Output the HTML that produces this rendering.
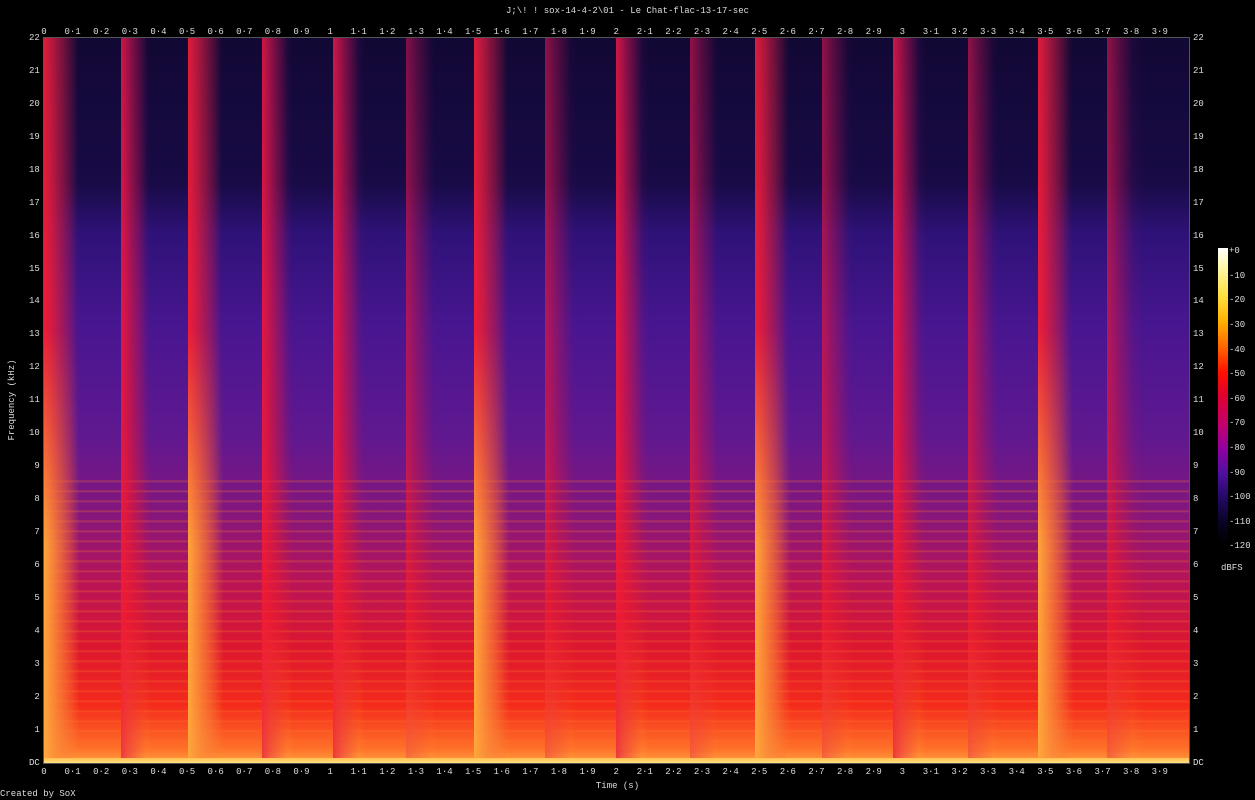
<!DOCTYPE html>
<html><head><meta charset="utf-8"><style>
html,body{margin:0;padding:0;background:#000;width:1255px;height:800px;overflow:hidden;font-family:"Liberation Mono","DejaVu Sans Mono",monospace;color:#ddd;font-size:9px}
.abs{position:absolute}
#plot{position:absolute;left:44px;top:38px;width:1145px;height:725px;overflow:hidden;background:#140838}
.seg{position:absolute;top:0;height:725px;
 background:linear-gradient(to bottom,#120834 0%,#180b46 20%,#2e1278 27%,#481690 40%,#601890 55%,#86167c 66%,#b81458 75%,#dc1630 84%,#f42a1c 92%,#ff7028 98%,#ffa040 100%)}
.seg .early{position:absolute;inset:0;
 background:linear-gradient(to bottom,#701070 0%,#a01068 20%,#d0124a 35%,#e81430 55%,#ff2a14 80%,#ff8024 92%,#ffc848 100%);
 -webkit-mask-image:linear-gradient(to right,rgba(0,0,0,.75) 0,rgba(0,0,0,.3) 20%,transparent 45%);mask-image:linear-gradient(to right,rgba(0,0,0,.75) 0,rgba(0,0,0,.3) 20%,transparent 45%)}
.seg .hl{position:absolute;left:0;right:0;bottom:0;height:40%;
 background:repeating-linear-gradient(to bottom,rgba(255,60,20,0) 0,rgba(255,60,20,0) 7px,rgba(255,120,40,.35) 8px,rgba(255,60,20,0) 10px)}
.seg .edge{position:absolute;left:0;top:0;bottom:0;width:26px;
 background:linear-gradient(to right,rgba(235,25,60,.8) 0,rgba(230,20,60,.45) 10px,rgba(230,20,60,0) 26px)}
.strong .yel{position:absolute;left:0;width:36px;top:40%;bottom:0;
 background:linear-gradient(to right,rgba(255,190,60,.85) 0,rgba(255,190,60,.5) 14px,rgba(255,190,60,0) 36px);
 -webkit-mask-image:linear-gradient(to bottom,transparent,#000 50%);mask-image:linear-gradient(to bottom,transparent,#000 50%)}
.strong .edge{width:34px;background:linear-gradient(to right,rgba(245,30,50,.85) 0,rgba(240,30,50,.5) 14px,rgba(240,30,50,0) 34px)}
.row{position:absolute;display:flex}
.row span{display:block;text-align:center;flex:none}
.col{position:absolute;display:flex;flex-direction:column}
.col span{display:flex;align-items:center;flex:none;height:32.95px}
</style></head><body>
<div class="abs" style="left:0;width:1255px;top:6px;text-align:center">J;\! ! sox-14-4-2\01 - Le Chat-flac-13-17-sec</div>

<div id="plot">
<div class="seg strong" style="left:0;width:77px"><div class="early"></div><div class="hl"></div><div class="edge"></div><div class="yel"></div></div>
<div class="seg" style="left:77px;width:67px"><div class="early"></div><div class="hl"></div><div class="edge"></div></div>
<div class="seg strong" style="left:144px;width:74px"><div class="early"></div><div class="hl"></div><div class="edge"></div><div class="yel"></div></div>
<div class="seg" style="left:218px;width:71px"><div class="early"></div><div class="hl"></div><div class="edge"></div></div>
<div class="seg" style="left:289px;width:73px"><div class="early"></div><div class="hl"></div><div class="edge"></div></div>
<div class="seg" style="left:362px;width:68px"><div class="early" style="opacity:.6"></div><div class="hl"></div><div class="edge" style="opacity:.5"></div></div>
<div class="seg strong" style="left:430px;width:71px"><div class="early"></div><div class="hl"></div><div class="edge"></div><div class="yel"></div></div>
<div class="seg" style="left:501px;width:71px"><div class="early" style="opacity:.6"></div><div class="hl"></div><div class="edge" style="opacity:.6"></div></div>
<div class="seg" style="left:572px;width:74px"><div class="early"></div><div class="hl"></div><div class="edge"></div></div>
<div class="seg" style="left:646px;width:65px"><div class="early" style="opacity:.6"></div><div class="hl"></div><div class="edge" style="opacity:.6"></div></div>
<div class="seg strong" style="left:711px;width:67px"><div class="early"></div><div class="hl"></div><div class="edge"></div><div class="yel"></div></div>
<div class="seg" style="left:778px;width:71px"><div class="early" style="opacity:.6"></div><div class="hl"></div><div class="edge" style="opacity:.6"></div></div>
<div class="seg" style="left:849px;width:75px"><div class="early"></div><div class="hl"></div><div class="edge"></div></div>
<div class="seg" style="left:924px;width:70px"><div class="early" style="opacity:.6"></div><div class="hl"></div><div class="edge" style="opacity:.6"></div></div>
<div class="seg strong" style="left:994px;width:69px"><div class="early"></div><div class="hl"></div><div class="edge"></div><div class="yel"></div></div>
<div class="seg" style="left:1063px;width:82px"><div class="early" style="opacity:.6"></div><div class="hl"></div><div class="edge" style="opacity:.6"></div></div>
<div class="abs" style="left:0;right:0;bottom:0;height:5px;background:linear-gradient(#ffc050,#ffe080)"></div>
</div>
<div class="abs" style="left:43px;top:37px;width:1147px;height:727px;border:1px solid #555;box-sizing:border-box;pointer-events:none"></div>

<div class="row" style="left:29.7px;top:27px">
<span style="width:28.62px">0</span><span style="width:28.62px">0·1</span><span style="width:28.62px">0·2</span><span style="width:28.62px">0·3</span><span style="width:28.62px">0·4</span><span style="width:28.62px">0·5</span><span style="width:28.62px">0·6</span><span style="width:28.62px">0·7</span><span style="width:28.62px">0·8</span><span style="width:28.62px">0·9</span><span style="width:28.62px">1</span><span style="width:28.62px">1·1</span><span style="width:28.62px">1·2</span><span style="width:28.62px">1·3</span><span style="width:28.62px">1·4</span><span style="width:28.62px">1·5</span><span style="width:28.62px">1·6</span><span style="width:28.62px">1·7</span><span style="width:28.62px">1·8</span><span style="width:28.62px">1·9</span><span style="width:28.62px">2</span><span style="width:28.62px">2·1</span><span style="width:28.62px">2·2</span><span style="width:28.62px">2·3</span><span style="width:28.62px">2·4</span><span style="width:28.62px">2·5</span><span style="width:28.62px">2·6</span><span style="width:28.62px">2·7</span><span style="width:28.62px">2·8</span><span style="width:28.62px">2·9</span><span style="width:28.62px">3</span><span style="width:28.62px">3·1</span><span style="width:28.62px">3·2</span><span style="width:28.62px">3·3</span><span style="width:28.62px">3·4</span><span style="width:28.62px">3·5</span><span style="width:28.62px">3·6</span><span style="width:28.62px">3·7</span><span style="width:28.62px">3·8</span><span style="width:28.62px">3·9</span>
</div>
<div class="row" style="left:29.7px;top:767px">
<span style="width:28.62px">0</span><span style="width:28.62px">0·1</span><span style="width:28.62px">0·2</span><span style="width:28.62px">0·3</span><span style="width:28.62px">0·4</span><span style="width:28.62px">0·5</span><span style="width:28.62px">0·6</span><span style="width:28.62px">0·7</span><span style="width:28.62px">0·8</span><span style="width:28.62px">0·9</span><span style="width:28.62px">1</span><span style="width:28.62px">1·1</span><span style="width:28.62px">1·2</span><span style="width:28.62px">1·3</span><span style="width:28.62px">1·4</span><span style="width:28.62px">1·5</span><span style="width:28.62px">1·6</span><span style="width:28.62px">1·7</span><span style="width:28.62px">1·8</span><span style="width:28.62px">1·9</span><span style="width:28.62px">2</span><span style="width:28.62px">2·1</span><span style="width:28.62px">2·2</span><span style="width:28.62px">2·3</span><span style="width:28.62px">2·4</span><span style="width:28.62px">2·5</span><span style="width:28.62px">2·6</span><span style="width:28.62px">2·7</span><span style="width:28.62px">2·8</span><span style="width:28.62px">2·9</span><span style="width:28.62px">3</span><span style="width:28.62px">3·1</span><span style="width:28.62px">3·2</span><span style="width:28.62px">3·3</span><span style="width:28.62px">3·4</span><span style="width:28.62px">3·5</span><span style="width:28.62px">3·6</span><span style="width:28.62px">3·7</span><span style="width:28.62px">3·8</span><span style="width:28.62px">3·9</span>
</div>
<div class="abs" style="left:0;width:1235px;top:781px;text-align:center">Time (s)</div>

<div class="col" style="left:29px;top:21.5px;align-items:flex-end">
<span>22</span><span>21</span><span>20</span><span>19</span><span>18</span><span>17</span><span>16</span><span>15</span><span>14</span><span>13</span><span>12</span><span>11</span><span>10</span><span>9</span><span>8</span><span>7</span><span>6</span><span>5</span><span>4</span><span>3</span><span>2</span><span>1</span><span>DC</span>
</div>
<div class="col" style="left:1193px;top:21.5px">
<span>22</span><span>21</span><span>20</span><span>19</span><span>18</span><span>17</span><span>16</span><span>15</span><span>14</span><span>13</span><span>12</span><span>11</span><span>10</span><span>9</span><span>8</span><span>7</span><span>6</span><span>5</span><span>4</span><span>3</span><span>2</span><span>1</span><span>DC</span>
</div>
<div class="abs" style="left:-38px;top:395px;width:100px;text-align:center;white-space:nowrap;transform:rotate(-90deg)">Frequency (kHz)</div>

<div class="abs" style="left:1218px;top:248px;width:10px;height:296px;background:linear-gradient(to bottom,#fff 0%,#fff8b0 6%,#ffe040 16%,#ffb000 25%,#ff6000 34%,#ff1000 42%,#e00030 50%,#c00070 60%,#9000a0 68%,#5010a0 76%,#200860 85%,#080320 93%,#000 100%)"></div>
<div class="col" style="left:1229px;top:239px;font-size:9px">
<span style="height:24.6px">+0</span><span style="height:24.6px">-10</span><span style="height:24.6px">-20</span><span style="height:24.6px">-30</span><span style="height:24.6px">-40</span><span style="height:24.6px">-50</span><span style="height:24.6px">-60</span><span style="height:24.6px">-70</span><span style="height:24.6px">-80</span><span style="height:24.6px">-90</span><span style="height:24.6px">-100</span><span style="height:24.6px">-110</span><span style="height:24.6px">-120</span>
</div>
<div class="abs" style="left:1221px;top:563px">dBFS</div>
<div class="abs" style="left:0;top:789px">Created by SoX</div>
</body></html>
